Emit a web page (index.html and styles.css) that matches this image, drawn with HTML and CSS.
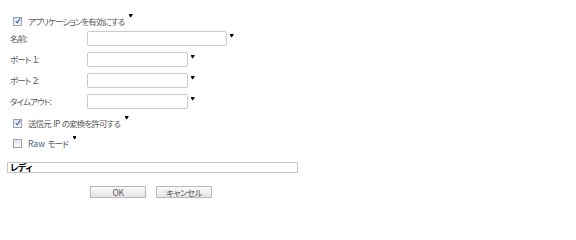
FILE: index.html
```html
<!DOCTYPE html>
<html lang="ja">
<head>
<meta charset="utf-8">
<link rel="stylesheet" href="styles.css">
</head>
<body>
<div class="page">
  <div class="check-row first">
    <span class="cb checked"><svg viewBox="0 0 8 8" width="6" height="6"><path d="M1 4 L3 6.5 L7 0.5" fill="none" stroke="#3a5fa8" stroke-width="1.4"/></svg></span>
    <span class="ctext">アプリケーションを有効にする</span>
    <svg class="mark" viewBox="0 0 4 4" width="3.5" height="3.5"><polygon points="0,0 4,0 4,1 2,4 1,3 0,1" fill="#000"/></svg>
  </div>
  <div class="fields">
    <span class="label">名前:</span>
    <span class="field"><span class="input wide"></span><svg class="mark" viewBox="0 0 4 4" width="3.5" height="3.5"><polygon points="0,0 4,0 4,1 2,4 1,3 0,1" fill="#000"/></svg></span>
    <span class="label">ポート 1:</span>
    <span class="field"><span class="input"></span><svg class="mark" viewBox="0 0 4 4" width="3.5" height="3.5"><polygon points="0,0 4,0 4,1 2,4 1,3 0,1" fill="#000"/></svg></span>
    <span class="label">ポート 2:</span>
    <span class="field"><span class="input"></span><svg class="mark" viewBox="0 0 4 4" width="3.5" height="3.5"><polygon points="0,0 4,0 4,1 2,4 1,3 0,1" fill="#000"/></svg></span>
    <span class="label">タイムアウト:</span>
    <span class="field"><span class="input"></span><svg class="mark" viewBox="0 0 4 4" width="3.5" height="3.5"><polygon points="0,0 4,0 4,1 2,4 1,3 0,1" fill="#000"/></svg></span>
  </div>
  <div class="check-row">
    <span class="cb checked"><svg viewBox="0 0 8 8" width="6" height="6"><path d="M1 4 L3 6.5 L7 0.5" fill="none" stroke="#3a5fa8" stroke-width="1.4"/></svg></span>
    <span class="ctext">送信元 IP の変換を許可する</span>
    <svg class="mark" viewBox="0 0 4 4" width="3.5" height="3.5"><polygon points="0,0 4,0 4,1 2,4 1,3 0,1" fill="#000"/></svg>
  </div>
  <div class="check-row">
    <span class="cb"></span>
    <span class="ctext"><span class="raw">Raw</span> モード</span>
    <svg class="mark" viewBox="0 0 4 4" width="3.5" height="3.5"><polygon points="0,0 4,0 4,1 2,4 1,3 0,1" fill="#000"/></svg>
  </div>
  <div class="status">レディ</div>
  <div class="buttons">
    <span class="btn">OK</span>
    <span class="btn">キャンセル</span>
  </div>
</div>
</body>
</html>
```

FILE: styles.css
```css
html, body {
  margin: 0;
  padding: 0;
  background: #ffffff;
}
body {
  font-family: "Noto Sans CJK JP", "Noto Sans", sans-serif;
  font-size: 8.5px;
  color: #5a5a5a;
  font-feature-settings: "palt";
  letter-spacing: -0.9px;
  word-spacing: 1.5px;
  width: 576px;
  height: 215px;
  overflow: hidden;
}
.page {
  padding: 15px 0 0 7px;
  display: flex;
  flex-direction: column;
}
.check-row {
  display: flex;
  align-items: center;
  height: 12px;
  padding-left: 6px;
  margin-top: 8px;
}
.check-row.first {
  margin-top: 0;
}
.cb {
  width: 7px;
  height: 7px;
  border: 1px solid #9aa3ad;
  background: linear-gradient(#e3e6eb, #f7f8fa);
  display: flex;
  align-items: center;
  justify-content: center;
  margin-right: 6px;
}
.ctext {
  line-height: 12px;
  white-space: pre;
}
.raw {
  color: #44618f;
  letter-spacing: 0;
}
.mark {
  align-self: flex-start;
  margin-left: 5px;
  margin-top: -1px;
  flex: none;
}
.fields {
  display: grid;
  grid-template-columns: 77px auto;
  row-gap: 6px;
  margin-top: 4px;
  align-items: center;
  padding-left: 3px;
}
.label {
  line-height: 15px;
  white-space: pre;
}
.field {
  display: flex;
  align-items: flex-start;
}
.input {
  width: 99px;
  height: 13px;
  border: 1px solid #cbcbcb;
  border-radius: 2px;
  background: #fff;
}
.input.wide {
  width: 138px;
}
.field .mark {
  margin-top: 3px;
  margin-left: 3px;
}
.status {
  margin-top: 13px;
  width: 287px;
  height: 9px;
  border: 1px solid #c4c4c4;
  font-size: 9px;
  line-height: 9px;
  color: #000;
  font-weight: bold;
  padding-left: 2px;
  letter-spacing: -0.5px;
}
.buttons {
  display: flex;
  gap: 10px;
  margin-top: 13px;
  padding-left: 83px;
}
.btn {
  width: 54px;
  height: 10px;
  border: 1px solid #b9b9b9;
  background: linear-gradient(#fbfbfb, #e4e4e4);
  text-align: center;
  line-height: 10px;
  font-size: 8.5px;
  color: #555;
  letter-spacing: -0.5px;
}
```
